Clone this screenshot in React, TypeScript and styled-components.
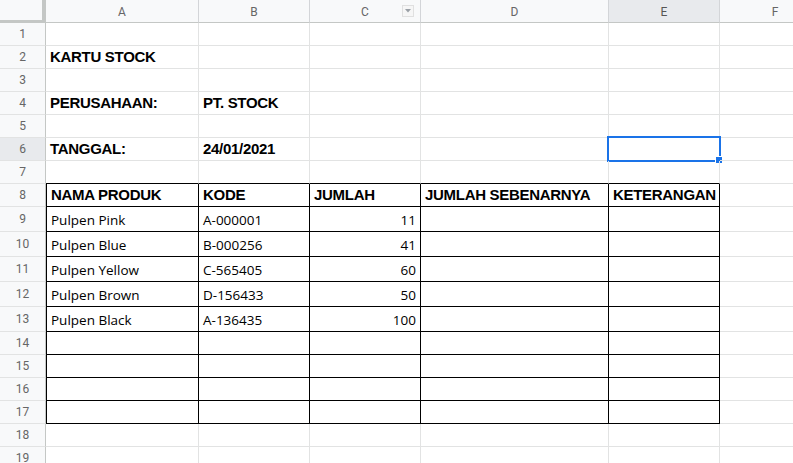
import { Fragment } from 'react';
import styled, { createGlobalStyle } from 'styled-components';

const GlobalStyle = createGlobalStyle`
  html, body {
    margin: 0;
    padding: 0;
    background: #fff;
    overflow: hidden;
  }
`

const colWidths = [153, 111, 111, 188, 111, 111];
const colNames = ['A', 'B', 'C', 'D', 'E', 'F'];

const rowHeight = (r: number) => (r >= 9 && r <= 13 ? 25 : 23);
const rows = Array.from({ length: 19 }, (_, i) => i + 1);

const Sheet = styled.div`
  width: 793px;
  height: 463px;
  overflow: hidden;
  display: grid;
  grid-template-columns: 46px ${colWidths.map((w) => w + 'px').join(' ')};
  grid-template-rows: 23px ${rows.map((r) => rowHeight(r) + 'px').join(' ')};
`

const Corner = styled.div`
  box-sizing: border-box;
  background: #f8f9fa;
  border-right: 4px solid #c4c7c5;
  border-bottom: 3px solid #c4c7c5;
`

const ColHeader = styled.div<{ $selected?: boolean }>`
  box-sizing: border-box;
  position: relative;
  display: flex;
  align-items: center;
  justify-content: center;
  background: ${(p) => (p.$selected ? '#e8eaed' : '#f8f9fa')};
  border-right: 1px solid #d3d5d8;
  border-bottom: 1px solid #c4c7c5;
  font-family: Roboto, "Liberation Sans", sans-serif;
  font-size: 12px;
  color: ${(p) => (p.$selected ? '#555' : '#666')};
  padding-top: 1px;
`

const FilterButton = styled.div`
  position: absolute;
  right: 6px;
  top: 5px;
  width: 12px;
  height: 12px;
  box-sizing: border-box;
  border: 1px solid #e0e0e0;
  background: #f6f6f6;
  display: flex;
  align-items: center;
  justify-content: center;
`

const RowHeader = styled.div<{ $selected?: boolean }>`
  box-sizing: border-box;
  display: flex;
  align-items: center;
  justify-content: center;
  background: ${(p) => (p.$selected ? '#e8eaed' : '#f8f9fa')};
  border-right: 1px solid #c4c7c5;
  border-bottom: 1px solid #e2e3e3;
  font-family: Roboto, "Liberation Sans", sans-serif;
  font-size: 12px;
  color: #666;
`

const Cell = styled.div<{
  $bold?: boolean;
  $right?: boolean;
  $boxed?: boolean;
  $boxLeft?: boolean;
  $boxTop?: boolean;
}>`
  box-sizing: border-box;
  position: relative;
  display: flex;
  align-items: flex-end;
  justify-content: ${(p) => (p.$right ? 'flex-end' : 'flex-start')};
  padding: 0 4px ${(p) => (p.$bold ? '3px' : '2px')} 4px;
  white-space: nowrap;
  overflow: visible;
  border-right: 1px solid ${(p) => (p.$boxed ? '#000' : '#e2e3e3')};
  border-bottom: 1px solid ${(p) => (p.$boxed || p.$boxTop ? '#000' : '#e2e3e3')};
  border-left: ${(p) => (p.$boxLeft ? '1px solid #000' : 'none')};
  line-height: 17px;
  color: #000;
  font-family: ${(p) =>
    p.$bold ? '"Liberation Sans", Arial, sans-serif' : '"Open Sans", "Noto Sans", sans-serif'};
  font-size: ${(p) => (p.$bold ? '15px' : '13.5px')};
  font-weight: ${(p) => (p.$bold ? 700 : 400)};
  letter-spacing: ${(p) => (p.$bold ? '-0.3px' : '0')};
`

const Selection = styled.div`
  position: absolute;
  left: -2px;
  top: -2px;
  right: -2px;
  bottom: -2px;
  border: 2px solid #1a73e8;
  pointer-events: none;
`

const FillHandle = styled.div`
  position: absolute;
  right: -4px;
  bottom: -4px;
  width: 6px;
  height: 6px;
  background: #1a73e8;
  border: 1px solid #fff;
`

type CellData = { text: string; bold?: boolean; right?: boolean };

const data: Record<number, (CellData | null)[]> = {
  2: [{ text: 'KARTU STOCK', bold: true }],
  4: [{ text: 'PERUSAHAAN:', bold: true }, { text: 'PT. STOCK', bold: true }],
  6: [{ text: 'TANGGAL:', bold: true }, { text: '24/01/2021', bold: true }],
  8: [
    { text: 'NAMA PRODUK', bold: true },
    { text: 'KODE', bold: true },
    { text: 'JUMLAH', bold: true },
    { text: 'JUMLAH SEBENARNYA', bold: true },
    { text: 'KETERANGAN', bold: true },
  ],
  9: [{ text: 'Pulpen Pink' }, { text: 'A-000001' }, { text: '11', right: true }],
  10: [{ text: 'Pulpen Blue' }, { text: 'B-000256' }, { text: '41', right: true }],
  11: [{ text: 'Pulpen Yellow' }, { text: 'C-565405' }, { text: '60', right: true }],
  12: [{ text: 'Pulpen Brown' }, { text: 'D-156433' }, { text: '50', right: true }],
  13: [{ text: 'Pulpen Black' }, { text: 'A-136435' }, { text: '100', right: true }],
};

const selectedRow = 6;
const selectedCol = 4;

function FilterIcon() {
  return (
    <svg width="6" height="4" viewBox="0 0 6 4">
      <path d="M0 0 L6 0 L3 3.5 Z" fill="#9aa0a6" />
    </svg>
  );
}

export default function App() {
  return (
    <>
      <GlobalStyle />
      <Sheet>
        <Corner />
        {colNames.map((c, i) => (
          <ColHeader key={c} $selected={i === selectedCol}>
            {c}
            {c === 'C' && (
              <FilterButton>
                <FilterIcon />
              </FilterButton>
            )}
          </ColHeader>
        ))}
        {rows.map((r) => (
          <Fragment key={r}>
            <RowHeader $selected={r === selectedRow}>{r}</RowHeader>
            {colNames.map((c, i) => {
              const cell = data[r]?.[i];
              const inTable = r >= 8 && r <= 17 && i <= 4;
              return (
                <Cell
                  key={c}
                  $bold={cell?.bold}
                  $right={cell?.right}
                  $boxed={inTable}
                  $boxLeft={inTable && i === 0}
                  $boxTop={r === 7 && i <= 4}
                >
                  {cell?.text}
                  {r === selectedRow && i === selectedCol && (
                    <Selection>
                      <FillHandle />
                    </Selection>
                  )}
                </Cell>
              );
            })}
          </Fragment>
        ))}
      </Sheet>
    </>
  );
}
